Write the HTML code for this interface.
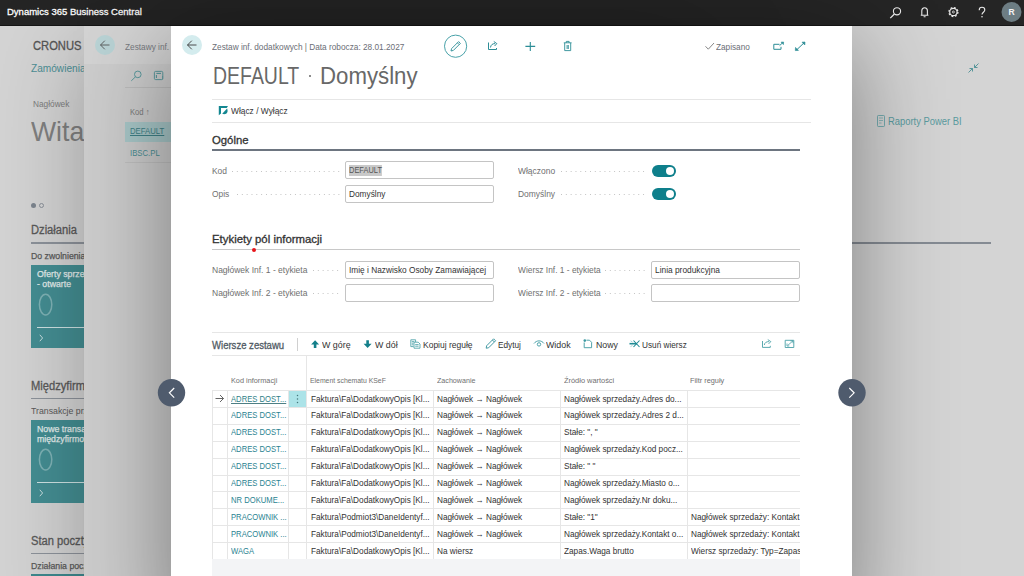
<!DOCTYPE html>
<html><head><meta charset="utf-8">
<style>
*{margin:0;padding:0;box-sizing:border-box}
html,body{width:1024px;height:576px;overflow:hidden;background:#d4d4d4;font-family:"Liberation Sans",sans-serif;color:#333}
.a{position:absolute;white-space:nowrap;line-height:1}
svg.a{overflow:visible}
#top{left:0;top:0;width:1024px;height:26px;background:#252525}
#home{left:0;top:26px;width:1024px;height:550px;background:#d4d4d4}
#p2{left:84px;top:26px;width:616px;height:600px;background:#cdcdcd;box-shadow:0 20px 90px rgba(0,0,0,.26)}
#p2h{left:84px;top:26px;width:87px;height:38px;background:#d3d3d3}
#dlg{left:171px;top:26px;width:681px;height:600px;background:#fff;box-shadow:0 20px 90px rgba(0,0,0,.42)}
.tile{width:60px;height:83px;background:#448e93;overflow:hidden}
.tile .tt{position:absolute;left:6px;top:4px;font-size:9.5px;line-height:10px;color:#e4eeee;-webkit-text-stroke:0.25px #e4eeee;transform:scaleX(.92);transform-origin:0 0}
.tile .tz{position:absolute;left:6px;top:27px;font-size:26px;color:#7aaeb1;font-weight:normal}
.tile .tl{position:absolute;left:6px;top:62px;width:60px;height:1px;background:#cfe3e4}
.tile .tc{position:absolute;left:7px;top:66px;font-size:12px;color:#e4eeee}
.lbl{font-size:9px;color:#707070}
.dots{position:absolute;height:1px;background-image:linear-gradient(90deg,#c2c2c2 0,#c2c2c2 1px,transparent 1px);background-size:4.83px 1px}
.inp{position:absolute;border:1px solid #c4c4c4;border-radius:2px;background:#fff;font-size:9.3px;color:#333;padding-left:3px;padding-top:3px;line-height:11px;height:17.5px;width:149px;white-space:nowrap;overflow:hidden}
.tog{position:absolute;width:24px;height:12px;border-radius:6px;background:#0e7f8b}
.tog:after{content:"";position:absolute;right:2px;top:2px;width:8px;height:8px;border-radius:50%;background:#fff}
.sh{font-size:11px;color:#333;-webkit-text-stroke:0.3px #333}
.tb{font-size:9px;color:#333}
.th{font-size:8px;color:#707070}
.c{font-size:9px;color:#333}
.l{font-size:9px;color:#2a8391}
.hl{position:absolute;background:#e6e6e6}
.a.c{transform:scaleX(.915);transform-origin:0 0}
.a.l{transform:scaleX(.85);transform-origin:0 0}
.inp span,.inp i{display:inline-block;font-style:normal}
.vl{position:absolute;background:#e6e6e6}
.sx{transform:scaleX(var(--k,.92));transform-origin:0 0}
</style></head><body>
<div id="top" class="a"></div>
<div class="a" style="left:0;top:25px;width:1024px;height:1px;background:#161616"></div>
<div id="t_app" class="a" style="transform:scaleX(1.001);transform-origin:0 0;left:7px;top:7px;font-size:9.5px;color:#fff;-webkit-text-stroke:0.3px #fff">Dynamics 365 Business Central</div>

<div id="home" class="a"></div>
<!-- home content -->
<div id="t_cr" class="a sx" style="left:33px;top:39px;font-size:13px;color:#555;-webkit-text-stroke:0.3px #555;--k:.86">CRONUS</div>
<div class="a sx" style="left:31px;top:63px;font-size:11px;color:#4d8f95">Zamówienia</div>
<div class="a sx" style="left:33px;top:100px;font-size:9px;color:#7e7e7e">Nagłówek</div>
<div class="a sx" style="left:31px;top:118px;font-size:28px;color:#808080;--k:.95">Wita</div>
<div class="a" style="left:31px;top:203px;width:5px;height:5px;border-radius:50%;background:#7d858f"></div>
<div class="a" style="left:39px;top:203px;width:5px;height:5px;border-radius:50%;border:1px solid #8a9099"></div>
<div class="a sx" style="left:31px;top:224px;font-size:12px;color:#5a5a5a;-webkit-text-stroke:0.3px #5a5a5a;--k:.93">Działania</div>
<div class="a" style="left:31px;top:242px;width:60px;height:2px;background:#8d939b"></div>
<div class="a sx" style="left:31px;top:251px;font-size:9.5px;color:#5a5a5a;-webkit-text-stroke:0.25px #5a5a5a">Do zwolnienia</div>
<div class="a tile" style="left:31px;top:265px"><div class="tt">Oferty sprzedaży<br>- otwarte</div><svg class="a" style="left:0;top:0" width="60" height="83"><ellipse cx="14.6" cy="39.6" rx="6.2" ry="10.4" fill="none" stroke="#7fb3b6" stroke-width="1.5"/><path d="M8.8 69.8L11.6 73L8.8 76.2" fill="none" stroke="#d8e8e9" stroke-width="0.9"/></svg><div class="tl"></div></div>
<div class="a sx" style="left:31px;top:380px;font-size:12px;color:#5a5a5a;-webkit-text-stroke:0.3px #5a5a5a;--k:.93">Międzyfirmowe</div>
<div class="a" style="left:31px;top:398px;width:60px;height:1px;background:#8d939b"></div>
<div class="a sx" style="left:31px;top:406px;font-size:9.5px;color:#5a5a5a">Transakcje przychodzące</div>
<div class="a tile" style="left:31px;top:420px"><div class="tt">Nowe transakcje<br>międzyfirmowe</div><svg class="a" style="left:0;top:0" width="60" height="83"><ellipse cx="14.6" cy="39.6" rx="6.2" ry="10.4" fill="none" stroke="#7fb3b6" stroke-width="1.5"/><path d="M8.8 69.8L11.6 73L8.8 76.2" fill="none" stroke="#d8e8e9" stroke-width="0.9"/></svg><div class="tl"></div></div>
<div class="a sx" style="left:31px;top:535px;font-size:12px;color:#5a5a5a;-webkit-text-stroke:0.3px #5a5a5a;--k:.93">Stan poczty</div>
<div class="a" style="left:31px;top:553px;width:60px;height:1px;background:#8d939b"></div>
<div class="a sx" style="left:31px;top:561px;font-size:9.5px;color:#5a5a5a;-webkit-text-stroke:0.25px #5a5a5a">Działania pocztowe</div>
<div class="a" style="left:31px;top:574px;width:60px;height:2px;background:#3f8a8f"></div>
<div id="p2" class="a"></div>
<div id="p2h" class="a"></div>
<!-- p2 content -->
<div class="a" style="left:95px;top:35px;width:20px;height:20px;border-radius:50%;background:#b9d3d5"></div>
<svg class="a" style="left:98px;top:38px" width="14" height="14" viewBox="0 0 14 14"><path d="M2.5 7H11.5M2.5 7L6.8 2.7M2.5 7L6.8 11.3" stroke="#555" stroke-width="0.9" fill="none"/></svg>
<div class="a sx" style="left:125px;top:42px;font-size:9.5px;color:#777a80;--k:.87">Zestawy inf. dodatkowych</div>
<svg class="a" style="left:126px;top:66px" width="44" height="20" viewBox="126 66 44 20"><circle cx="137.8" cy="74.4" r="3.3" stroke="#4f9499" stroke-width="0.9" fill="none"/><path d="M135.5 76.8L131.3 80.8" stroke="#4f9499" stroke-width="0.9"/><rect x="154.4" y="71.4" width="8.4" height="8.2" rx="1.2" stroke="#4f9499" stroke-width="0.9" fill="none"/><path d="M156.4 73.4H161M156.4 75V78" stroke="#4f9499" stroke-width="1"/><path d="M162.6 76V79.4" stroke="#4f9499" stroke-width="0.6"/></svg>

<div class="a" style="left:125px;top:87px;width:46px;height:1px;background:#bdbdbd"></div>
<div class="a sx" style="left:130px;top:108px;font-size:8.5px;color:#7a7a7a;--k:.9">Kod ↑</div>
<div class="a" style="left:125px;top:122px;width:46px;height:20px;background:#a9c8c9"></div>
<div class="a sx" style="left:130px;top:127px;font-size:9px;color:#3f8288;text-decoration:underline;text-decoration-thickness:0.8px;--k:.86">DEFAULT</div>
<div class="a sx" style="left:130px;top:149px;font-size:9px;color:#4a8e93;--k:.86">IBSC.PL</div>
<div class="a" style="left:125px;top:162px;width:46px;height:1px;background:#c0c0c0"></div>
<!-- right content -->
<svg class="a" style="left:968px;top:63px" width="11" height="10" viewBox="0 0 11 10"><path d="M10.5 0.5L6.5 4.5M6.5 1.5V4.5H9.5M0.5 9.5L4.5 5.5M1.5 5.5H4.5V8.5" stroke="#4a8e93" stroke-width="0.9" fill="none"/></svg>
<svg class="a" style="left:877px;top:115px" width="8" height="12" viewBox="0 0 8 12"><rect x="0.5" y="0.5" width="7" height="11" rx="0.8" stroke="#6aa6aa" stroke-width="0.9" fill="none"/><path d="M2 3H6M2 5.5H6M2 8H4.5" stroke="#6aa6aa" stroke-width="0.7"/></svg>
<div class="a sx" style="left:888px;top:116px;font-size:11px;color:#5a9b9f;--k:.855">Raporty Power BI</div>
<div class="a" style="left:852px;top:242px;width:139px;height:1.5px;background:#858b93"></div>
<div id="dlg" class="a"></div>
<!-- dialog header -->
<div class="a" style="left:182px;top:35px;width:20px;height:20px;border-radius:50%;background:#d4ecee"></div>
<svg class="a" style="left:185px;top:38px" width="14" height="14" viewBox="0 0 14 14"><path d="M2.5 7H11.5M2.5 7L6.8 2.7M2.5 7L6.8 11.3" stroke="#3a3a3a" stroke-width="0.9" fill="none"/></svg>
<div id="t_bc" class="a" style="transform:scaleX(0.870);transform-origin:0 0;left:212px;top:42px;font-size:9.5px;color:#6b6e76">Zestaw inf. dodatkowych | Data robocza: 28.01.2027</div>
<div id="t_ti1" class="a" style="transform:scaleX(0.836);transform-origin:0 0;left:213px;top:65px;font-size:23.3px;color:#686868">DEFAULT</div>
<div class="a" style="left:309px;top:74.5px;width:2px;height:2px;border-radius:1px;background:#666"></div>
<div id="t_ti2" class="a" style="transform:scaleX(0.954);transform-origin:0 0;left:319.5px;top:65px;font-size:23.3px;color:#686868">Domyślny</div>
<div class="hl" style="left:212px;top:99px;width:599px;height:1px"></div>
<div class="hl" style="left:212px;top:122px;width:599px;height:1px"></div>
<div id="t_wl" class="a" style="transform:scaleX(0.931);transform-origin:0 0;left:231px;top:107px;font-size:9px;color:#333">Włącz / Wyłącz</div>
<div id="t_zap" class="a" style="transform:scaleX(0.865);transform-origin:0 0;left:716px;top:42px;font-size:9.5px;color:#6b6e76">Zapisano</div>

<!-- Ogolne -->
<div id="t_og" class="a sh" style="transform:scaleX(1.029);transform-origin:0 0;left:212px;top:135px">Ogólne</div>
<div class="a" style="left:212px;top:149px;width:588px;height:2px;background:#6d7580"></div>
<div id="t_kod" class="a lbl" style="transform:scaleX(0.937);transform-origin:0 0;left:212px;top:167px">Kod</div>
<div class="dots" style="left:232px;top:171px;width:109px"></div>
<div class="inp" style="left:345px;top:161px"><span id="t_i1" style="transform:scaleX(0.802);transform-origin:0 0;background:#c9c9c9;color:#555">DEFAULT</span></div>
<div id="t_opis" class="a lbl" style="transform:scaleX(0.934);transform-origin:0 0;left:212px;top:190px">Opis</div>
<div class="dots" style="left:236.8px;top:194px;width:104px"></div>
<div class="inp" style="left:345px;top:185px"><i id="t_i2" style="transform:scaleX(0.894);transform-origin:0 0;">Domyślny</i></div>
<div id="t_wlo" class="a lbl" style="transform:scaleX(0.939);transform-origin:0 0;left:518px;top:167px">Włączono</div>
<div class="dots" style="left:561.3px;top:171px;width:86px"></div>
<div class="tog" style="left:652px;top:165px"></div>
<div id="t_dom" class="a lbl" style="transform:scaleX(0.939);transform-origin:0 0;left:518px;top:190px">Domyślny</div>
<div class="dots" style="left:561.3px;top:194px;width:86px"></div>
<div class="tog" style="left:652px;top:188px"></div>

<!-- Etykiety -->
<div id="t_et" class="a sh" style="transform:scaleX(1.035);transform-origin:0 0;left:212px;top:234px">Etykiety pól informacji</div>
<div class="a" style="left:212px;top:249px;width:588px;height:1px;background:#c8c8c8"></div>
<div class="a" style="left:252px;top:248px;width:4px;height:4px;border-radius:50%;background:#e8141a"></div>
<div id="t_n1" class="a lbl" style="transform:scaleX(0.944);transform-origin:0 0;left:212px;top:266px">Nagłówek Inf. 1 - etykieta</div>
<div class="dots" style="left:313.4px;top:270px;width:27px"></div>
<div class="inp" style="left:345px;top:261px"><i id="t_i3" style="transform:scaleX(0.893);transform-origin:0 0;">Imię i Nazwisko Osoby Zamawiającej</i></div>
<div id="t_n2" class="a lbl" style="transform:scaleX(0.944);transform-origin:0 0;left:212px;top:289px">Nagłówek Inf. 2 - etykieta</div>
<div class="dots" style="left:313.4px;top:293px;width:27px"></div>
<div class="inp" style="left:345px;top:284px"></div>
<div id="t_w1" class="a lbl" style="transform:scaleX(0.929);transform-origin:0 0;left:518px;top:266px">Wiersz Inf. 1 - etykieta</div>
<div class="dots" style="left:605px;top:270px;width:42px"></div>
<div class="inp" style="left:651px;top:261px"><i id="t_i4" style="transform:scaleX(0.898);transform-origin:0 0;">Linia produkcyjna</i></div>
<div id="t_w2" class="a lbl" style="transform:scaleX(0.929);transform-origin:0 0;left:518px;top:289px">Wiersz Inf. 2 - etykieta</div>
<div class="dots" style="left:605px;top:293px;width:42px"></div>
<div class="inp" style="left:651px;top:284px"></div>

<!-- Wiersze -->
<div class="hl" style="left:212px;top:332px;width:588px;height:1px"></div>
<div id="t_wz" class="a" style="transform:scaleX(0.909);transform-origin:0 0;left:212px;top:340px;font-size:10.5px;color:#505a64;-webkit-text-stroke:0.3px #505a64">Wiersze zestawu</div>
<div class="a" style="left:297px;top:338px;width:1px;height:13px;background:#d0d0d0"></div>
<div id="t_up" class="a tb" style="transform:scaleX(0.986);transform-origin:0 0;left:322px;top:341px">W górę</div>
<div id="t_dn" class="a tb" style="transform:scaleX(0.982);transform-origin:0 0;left:375px;top:341px">W dół</div>
<div id="t_kp" class="a tb" style="transform:scaleX(0.944);transform-origin:0 0;left:423px;top:341px">Kopiuj regułę</div>
<div id="t_ed" class="a tb" style="transform:scaleX(0.915);transform-origin:0 0;left:498px;top:341px">Edytuj</div>
<div id="t_wd" class="a tb" style="transform:scaleX(0.983);transform-origin:0 0;left:546px;top:341px">Widok</div>
<div id="t_nw" class="a tb" style="transform:scaleX(0.973);transform-origin:0 0;left:596px;top:341px">Nowy</div>
<div id="t_us" class="a tb" style="transform:scaleX(0.914);transform-origin:0 0;left:642px;top:341px">Usuń wiersz</div>
<div class="hl" style="left:212px;top:355px;width:588px;height:1px"></div>

<div class="vl" style="left:306px;top:356px;width:1px;height:34px"></div>
<div id="t_h1" class="a th" style="transform:scaleX(0.913);transform-origin:0 0;left:231px;top:377px">Kod informacji</div>
<div id="t_h2" class="a th" style="transform:scaleX(0.857);transform-origin:0 0;left:310px;top:377px">Element schematu KSeF</div>
<div id="t_h3" class="a th" style="transform:scaleX(0.892);transform-origin:0 0;left:437px;top:377px">Zachowanie</div>
<div id="t_h4" class="a th" style="transform:scaleX(0.926);transform-origin:0 0;left:564px;top:377px">Źródło wartości</div>
<div id="t_h5" class="a th" style="transform:scaleX(0.916);transform-origin:0 0;left:690px;top:377px">Filtr reguły</div>

<div id="rows"></div><div class="a" style="left:212px;top:390px;width:588px;height:169px;background:#fff;overflow:hidden">
<div class="hl" style="left:0;top:0.0px;width:588px;height:1px"></div>
<div class="hl" style="left:0;top:16.9px;width:588px;height:1px"></div>
<div class="hl" style="left:0;top:33.8px;width:588px;height:1px"></div>
<div class="hl" style="left:0;top:50.7px;width:588px;height:1px"></div>
<div class="hl" style="left:0;top:67.6px;width:588px;height:1px"></div>
<div class="hl" style="left:0;top:84.5px;width:588px;height:1px"></div>
<div class="hl" style="left:0;top:101.4px;width:588px;height:1px"></div>
<div class="hl" style="left:0;top:118.3px;width:588px;height:1px"></div>
<div class="hl" style="left:0;top:135.2px;width:588px;height:1px"></div>
<div class="hl" style="left:0;top:152.1px;width:588px;height:1px"></div>
<div class="hl" style="left:0;top:169.0px;width:588px;height:1px"></div>
<div class="vl" style="left:0px;top:0;width:1px;height:169px"></div>
<div class="vl" style="left:15px;top:0;width:1px;height:169px"></div>
<div class="vl" style="left:76px;top:0;width:1px;height:169px"></div>
<div class="vl" style="left:94px;top:0;width:1px;height:169px"></div>
<div class="vl" style="left:221px;top:0;width:1px;height:169px"></div>
<div class="vl" style="left:348px;top:0;width:1px;height:169px"></div>
<div class="vl" style="left:475px;top:0;width:1px;height:169px"></div>
<div class="a" style="left:77px;top:1px;width:17px;height:16px;background:#ace3e8"></div>
<svg class="a" style="left:83px;top:3px" width="5" height="12" viewBox="0 0 5 12"><circle cx="2.5" cy="2.6" r="0.75" fill="#46777c"/><circle cx="2.5" cy="6" r="0.75" fill="#46777c"/><circle cx="2.5" cy="9.4" r="0.75" fill="#46777c"/></svg>
<div class="a l" style="left:19px;top:4.5px;text-decoration:underline;text-decoration-thickness:0.8px;text-underline-offset:1px;text-decoration-color:#4d7f84;color:#2f7f88;">ADRES DOST...</div>
<div class="a c" style="left:99px;top:4.5px">Faktura\Fa\DodatkowyOpis [Kl...</div>
<div class="a c" style="left:225px;top:4.5px">Nagłówek → Nagłówek</div>
<div class="a c" style="left:352px;top:4.5px">Nagłówek sprzedaży.Adres do...</div>
<div class="a l" style="left:19px;top:21.4px;">ADRES DOST...</div>
<div class="a c" style="left:99px;top:21.4px">Faktura\Fa\DodatkowyOpis [Kl...</div>
<div class="a c" style="left:225px;top:21.4px">Nagłówek → Nagłówek</div>
<div class="a c" style="left:352px;top:21.4px">Nagłówek sprzedaży.Adres 2 d...</div>
<div class="a l" style="left:19px;top:38.3px;">ADRES DOST...</div>
<div class="a c" style="left:99px;top:38.3px">Faktura\Fa\DodatkowyOpis [Kl...</div>
<div class="a c" style="left:225px;top:38.3px">Nagłówek → Nagłówek</div>
<div class="a c" style="left:352px;top:38.3px">Stałe: &quot;, &quot;</div>
<div class="a l" style="left:19px;top:55.2px;">ADRES DOST...</div>
<div class="a c" style="left:99px;top:55.2px">Faktura\Fa\DodatkowyOpis [Kl...</div>
<div class="a c" style="left:225px;top:55.2px">Nagłówek → Nagłówek</div>
<div class="a c" style="left:352px;top:55.2px">Nagłówek sprzedaży.Kod pocz...</div>
<div class="a l" style="left:19px;top:72.1px;">ADRES DOST...</div>
<div class="a c" style="left:99px;top:72.1px">Faktura\Fa\DodatkowyOpis [Kl...</div>
<div class="a c" style="left:225px;top:72.1px">Nagłówek → Nagłówek</div>
<div class="a c" style="left:352px;top:72.1px">Stałe: &quot; &quot;</div>
<div class="a l" style="left:19px;top:89.0px;">ADRES DOST...</div>
<div class="a c" style="left:99px;top:89.0px">Faktura\Fa\DodatkowyOpis [Kl...</div>
<div class="a c" style="left:225px;top:89.0px">Nagłówek → Nagłówek</div>
<div class="a c" style="left:352px;top:89.0px">Nagłówek sprzedaży.Miasto o...</div>
<div class="a l" style="left:19px;top:105.9px;">NR DOKUME...</div>
<div class="a c" style="left:99px;top:105.9px">Faktura\Fa\DodatkowyOpis [Kl...</div>
<div class="a c" style="left:225px;top:105.9px">Nagłówek → Nagłówek</div>
<div class="a c" style="left:352px;top:105.9px">Nagłówek sprzedaży.Nr doku...</div>
<div class="a l" style="left:19px;top:122.8px;">PRACOWNIK ...</div>
<div class="a c" style="left:99px;top:122.8px">Faktura\Podmiot3\DaneIdentyf...</div>
<div class="a c" style="left:225px;top:122.8px">Nagłówek → Nagłówek</div>
<div class="a c" style="left:352px;top:122.8px">Stałe: &quot;1&quot;</div>
<div class="a c" style="left:479px;top:122.8px">Nagłówek sprzedaży: Kontakt</div>
<div class="a l" style="left:19px;top:139.7px;">PRACOWNIK ...</div>
<div class="a c" style="left:99px;top:139.7px">Faktura\Podmiot3\DaneIdentyf...</div>
<div class="a c" style="left:225px;top:139.7px">Nagłówek → Nagłówek</div>
<div class="a c" style="left:352px;top:139.7px">Nagłówek sprzedaży.Kontakt o...</div>
<div class="a c" style="left:479px;top:139.7px">Nagłówek sprzedaży: Kontakt</div>
<div class="a l" style="left:19px;top:156.6px;">WAGA</div>
<div class="a c" style="left:99px;top:156.6px">Faktura\Fa\DodatkowyOpis [Kl...</div>
<div class="a c" style="left:225px;top:156.6px">Na wiersz</div>
<div class="a c" style="left:352px;top:156.6px">Zapas.Waga brutto</div>
<div class="a c" style="left:479px;top:156.6px">Wiersz sprzedaży: Typ=Zapas</div>
</div>
<svg class="a" style="left:214px;top:393px" width="11" height="11" viewBox="0 0 11 11"><path d="M1.5 5.5H9.5M6 2L9.5 5.5L6 9" stroke="#555" stroke-width="0.9" fill="none"/></svg><!--/rows-->
<div class="a" style="left:212px;top:559px;width:588px;height:17px;background:#f3f4f6"></div>

<!-- icons -->
<svg class="a" style="left:0;top:0" width="1024" height="576" viewBox="0 0 1024 576">
 <g fill="none" stroke="#2c8d96" stroke-width="1">
  <!-- pencil circle -->
  <circle cx="455.6" cy="46.2" r="11.1" stroke="#49a2a9"/>
  <path d="M451 51L451.6 48.6L458.6 41.6L460.4 43.4L453.4 50.4Z M457.4 42.8L459.2 44.6" stroke-width="0.9"/>
  <!-- share -->
  <path d="M488.5 42.5V49.5H496.5V48" stroke-width="1"/>
  <path d="M490.5 47.5C490.8 44.8 492.5 43.6 495 43.6M493.8 41.5L496.8 43.6L494.6 46" stroke-width="1"/>
  <!-- plus -->
  <path d="M525.4 46.4H535.2M530.3 41.9V51" stroke-width="1.1"/>
  <!-- trash -->
  <path d="M563.8 42.8H571.6M566.3 42.8V41.4H569.1V42.8M564.7 43V50.6H570.7V43M567.1 45V49M568.3 45V49" stroke-width="0.9"/>
  <!-- open new window -->
  <path d="M773.8 44.3H779.5M781 46.8V49.3H773.8V44.3M779.6 45.6L782.4 43" stroke-width="1"/><path d="M781 42.2L783.6 42L783.4 44.6Z" fill="#2c8d96" stroke-width="0.6"/>
  <!-- expand -->
  <path d="M797 49.5L804 42.9" stroke-width="1"/><path d="M802 42.2L805 42L804.8 45Z M795.5 47.4L795.3 50.6L798.5 50.4Z" fill="#2c8d96" stroke-width="0.6"/>
 </g>
 <!-- checkmark -->
 <path d="M705.5 46.3L708.3 49.2L714 43" fill="none" stroke="#777" stroke-width="0.9"/>
 <!-- włącz icon -->
 <path d="M218.8 105.9H228L226.7 108H221V113.6L218.8 115.2Z" fill="#138791"/>
 <path d="M222.2 113.8L227.1 108.6C228.6 112.4 226.4 115.2 222.2 113.8Z" fill="#138791"/>
 <!-- toolbar -->
 <path d="M315.1 340.2L311.1 344.4H313.8V348H316.4V344.4H319.1Z" fill="#137f8a"/>
 <path d="M367.6 348L363.6 343.8H366.3V340.2H368.9V343.8H371.6Z" fill="#137f8a"/>
 <g fill="none" stroke="#3d9aa2" stroke-width="0.8">
  <path d="M410.8 339.8H415.6V342M410.8 339.8V346.6H413.5M411.8 341.6H414.2M411.8 343.2H413.4M411.8 344.8H413.4"/>
  <path d="M414 342.2H418.2L420 344V348.2H414Z M415.2 344.6H418.6M415.2 346.2H418.6"/>
 </g>
 <path d="M486.2 348.2L486.6 345.8L493.6 338.8L495.6 340.8L488.6 347.8Z M492.4 340L494.4 342" fill="none" stroke="#2f8f98" stroke-width="0.9"/>
 <g fill="none" stroke="#3d9aa2" stroke-width="0.9">
  <path d="M534 343.5C536.5 340 541.5 340 544 343.5"/>
  <circle cx="539" cy="344.4" r="1.7"/>
 </g>
 <g fill="none" stroke="#3d9aa2" stroke-width="0.9">
  <path d="M586.5 340.2H589.5L591.6 342.3V347.7H584.2V342.5"/>
 </g>
 <circle cx="584.8" cy="340.6" r="1.3" fill="#3d9aa2"/>
 <g fill="none" stroke="#1e8a94" stroke-width="1.1">
  <path d="M633.5 340.5L639.5 347M639.5 340.5L633.5 347"/>
  <path d="M629.5 343.7H637" stroke-width="1.6"/>
  <path d="M630.5 340.8L632.5 342M630.5 346.6L632.5 345.4" stroke-width="0.7" stroke="#7fbfc4"/>
 </g>
 <g fill="none" stroke="#4aa0a7" stroke-width="0.9">
  <path d="M762.5 341V347.4H770.3V345.8"/>
  <path d="M764.3 345C764.7 342.6 766.4 341.6 769 341.6M767.8 339.6L770.8 341.6L768.6 343.9"/>
  <path d="M785.2 340.3H793.8V347.5H785.2Z"/>
  <path d="M788 345.2L793 340.8M790.4 340.8H793V343.2M787 343.5V346H789.3" stroke-width="0.8"/>
 </g>
 <!-- top bar icons -->
 <g fill="none" stroke="#e8e8e8" stroke-width="1.1">
  <circle cx="897" cy="11.3" r="3.6"/>
  <path d="M894.4 14L890.3 18.1" stroke-width="1.3"/>
  <path d="M920.8 15.3H928.4M921.8 15.3V10.8C921.8 8.6 923.1 7.7 924.6 7.7C926.1 7.7 927.4 8.6 927.4 10.8V15.3M923.6 16.7H925.6"/>
  <circle cx="953.4" cy="12" r="1" stroke-width="0.8"/>
  <circle cx="953.4" cy="12" r="3.7" stroke-width="1.2"/><circle cx="953.4" cy="12" r="4.5" stroke-width="1.3" stroke-dasharray="1.77 1.77"/>
  <path d="M979.2 10.2C979.2 8.3 980.5 7.3 982 7.3C983.5 7.3 984.8 8.3 984.8 10C984.8 12.2 982 12.3 982 14.6" stroke-width="1.1"/>
 </g>
 <circle cx="982" cy="16.8" r="0.8" fill="#e8e8e8"/>
 <circle cx="1011.5" cy="12" r="10" fill="#6d7d83"/>
 <!-- nav circles -->
 <circle cx="171.5" cy="392.7" r="13.7" fill="#4f5b6d"/>
 <path d="M174.2 388L169.4 392.8L174.2 397.6" fill="none" stroke="#fff" stroke-width="1.2"/>
 <circle cx="852" cy="392.7" r="13.7" fill="#4f5b6d"/>
 <path d="M849.3 388L854.1 392.8L849.3 397.6" fill="none" stroke="#fff" stroke-width="1.2"/>
</svg>
<div class="a" style="left:1008.6px;top:8px;font-size:8.5px;font-weight:bold;color:#f4f4f4">R</div>
</body></html>
